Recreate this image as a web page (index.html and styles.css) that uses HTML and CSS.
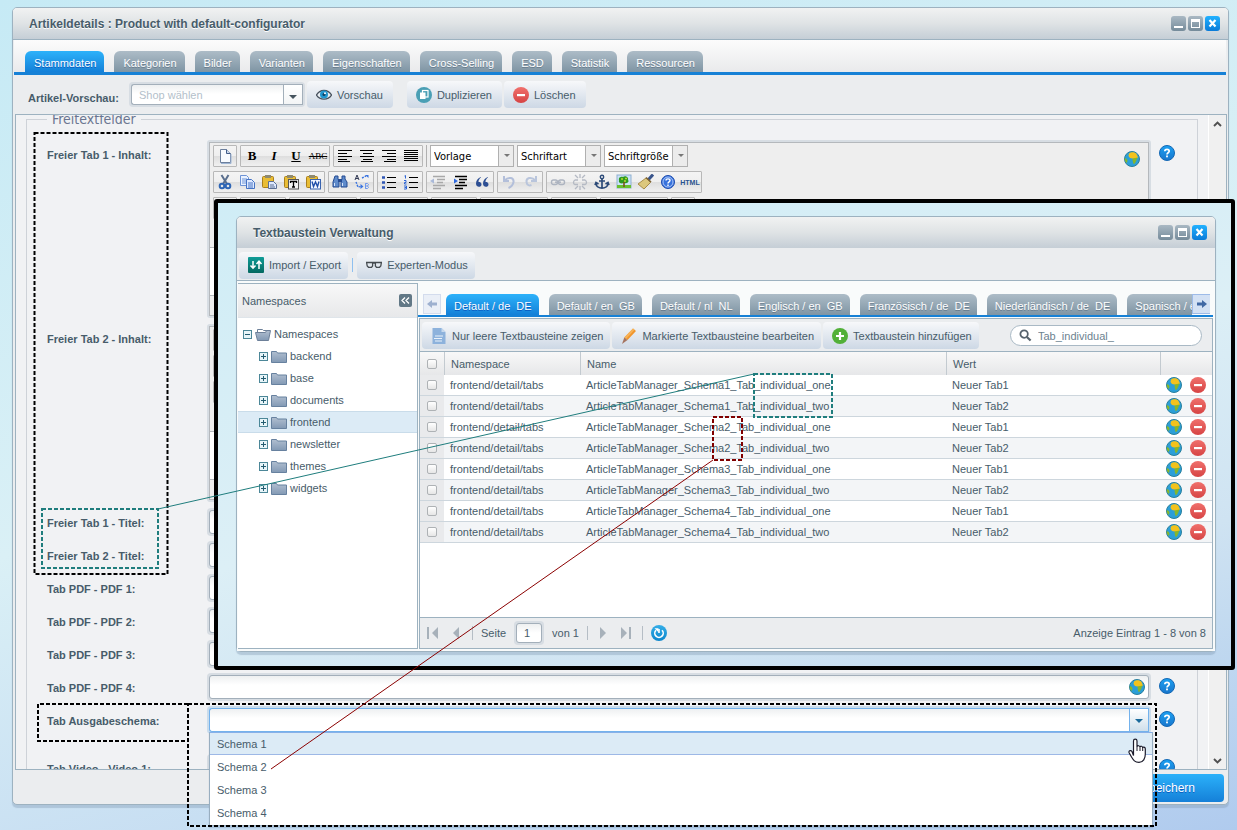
FILE: index.html
```
<!DOCTYPE html>
<html lang="de">
<head>
<meta charset="utf-8">
<title>Artikeldetails</title>
<link rel="stylesheet" href="styles.css">
</head>
<body>
<svg class="defs" aria-hidden="true">
  <defs>
    <linearGradient id="gFolder" x1="0" y1="0" x2="0" y2="1"><stop offset="0" stop-color="#b1bfd0"/><stop offset="1" stop-color="#8299b4"/></linearGradient>
    <linearGradient id="gTeal" x1="0" y1="0" x2="0" y2="1"><stop offset="0" stop-color="#0f9c97"/><stop offset="1" stop-color="#046860"/></linearGradient>
    <linearGradient id="gRed" x1="0" y1="0" x2="0" y2="1"><stop offset="0" stop-color="#f0706c"/><stop offset="1" stop-color="#d64444"/></linearGradient>
    <linearGradient id="gBlue" x1="0" y1="0" x2="0" y2="1"><stop offset="0" stop-color="#35aee8"/><stop offset="1" stop-color="#0c86cc"/></linearGradient>
    <linearGradient id="gHelp" x1="0" y1="0" x2="0" y2="1"><stop offset="0" stop-color="#1ba0f2"/><stop offset="1" stop-color="#1976cc"/></linearGradient>
  </defs>
  <symbol id="globe" viewBox="0 0 16 16"><circle cx="8" cy="8" r="7.5" fill="#2b9fd8" stroke="#2a7f9c"/><path d="M5 2.5C7 .8 11 .8 12.500 3L14 6.500l-2 1-2 .5-1.500-.6L6 7 4.500 5z" fill="#f3c21c"/><path d="M8.500 7.400L13.500 6.500 12.300 9.500 10.800 12.500 9.500 13 8.700 10z" fill="#86b62c"/><path d="M.8 7l2 1 .8 2-1.200 2C1 10.500.6 9 .8 7z" fill="#86b62c"/></symbol>
  <symbol id="help" viewBox="0 0 16 16"><circle cx="8" cy="8" r="7.500" fill="url(#gHelp)" stroke="#1468b4"/><path d="M5.800 6.200C5.800 3.700 10.200 3.700 10.200 6.200 10.200 7.700 8 7.700 8 9.400" fill="none" stroke="#fff" stroke-width="1.700"/><rect x="7.100" y="10.500" width="1.800" height="1.800" fill="#fff"/></symbol>
  <symbol id="minus" viewBox="0 0 16 16"><circle cx="8" cy="8" r="8" fill="url(#gRed)"/><rect x="4" y="7" width="8" height="2.200" fill="#fff"/></symbol>
  <symbol id="plus" viewBox="0 0 16 16"><circle cx="8" cy="8" r="8" fill="#52b038"/><path d="M4 8h8M8 4v8" stroke="#fff" stroke-width="2.200"/></symbol>
  <symbol id="eye" viewBox="0 0 16 16"><path d="M.5 8C4 2 12 2 15.500 8 12 13.500 4 13.500.5 8z" fill="#e8eef3" stroke="#46505c" stroke-width="1.300"/><circle cx="8" cy="7.500" r="4" fill="#2196cf"/><circle cx="8" cy="7.500" r="1.500" fill="#123f60"/><circle cx="9" cy="6.300" r="1" fill="#fff"/></symbol>
  <symbol id="copy" viewBox="0 0 16 16"><circle cx="8" cy="8" r="8" fill="#4a9fb5"/><rect x="6.500" y="3.500" width="5.500" height="6.500" fill="none" stroke="#fff" stroke-width="1.200"/><rect x="4" y="5.500" width="5.500" height="6.500" fill="#fff"/></symbol>
  <symbol id="swap" viewBox="0 0 16 16"><rect width="16" height="16" rx="1" fill="url(#gTeal)"/><path d="M5 4v7M2.500 8.500L5 11.200 7.500 8.500M11 12V4.500M8.500 7L11 4.200 13.500 7" fill="none" stroke="#fff" stroke-width="1.500"/></symbol>
  <symbol id="glasses" viewBox="0 0 16 16"><path d="M.6 5.500h6V9L5.500 10.300h-3L1.200 9zM9.400 5.500h6L14.800 9l-1.300 1.300h-3L9.400 9zM6.600 6h2.800M0 5.500h16" fill="none" stroke="#454b50" stroke-width="1.300"/></symbol>
  <symbol id="doc" viewBox="0 0 16 16"><path d="M1.500 0h9l4 4v12h-13z" fill="#8db2dc"/><path d="M10.500 0l4 4h-4z" fill="#c6d9ee"/><path d="M4 8h8M3 10.500h8M4 13h7" stroke="#eaf2fa" stroke-width="1.200"/></symbol>
  <symbol id="pencil" viewBox="0 0 16 16"><path d="M12 .5l3 2.500-8.500 9L3.300 9.500z" fill="#f0952c"/><path d="M12 .5L13.500 1.800 5 11 3.300 9.500z" fill="#f7b257"/><path d="M3.300 9.500l3.200 2.500L1 16z" fill="#a5745f"/></symbol>
  <symbol id="search" viewBox="0 0 14 14"><circle cx="5.500" cy="5.500" r="4" fill="none" stroke="#56626c" stroke-width="1.900"/><path d="M8.500 8.500l4 4" stroke="#56626c" stroke-width="2.300"/></symbol>
  <symbol id="folder" viewBox="0 0 16 13"><path d="M.5 1.500h5l1 1.500h9v9.500H.5z" fill="url(#gFolder)" stroke="#67819f"/></symbol>
  <symbol id="folderOpen" viewBox="0 0 16 13"><path d="M2.500 4V1.500h5l1 1h6V6" fill="#fff" stroke="#6d8099"/><path d="M.5 4.500h10l1-2h4l-2 10h-11z" fill="url(#gFolder)" stroke="#6d8099"/></symbol>
  <symbol id="exp" viewBox="0 0 9 9"><rect x=".5" y=".5" width="8" height="8" fill="#e8f5f9" stroke="#4c8798"/><path d="M2 4.500h5M4.500 2v5" stroke="#245c70"/></symbol>
  <symbol id="col" viewBox="0 0 9 9"><rect x=".5" y=".5" width="8" height="8" fill="#e8f5f9" stroke="#4c8798"/><path d="M2 4.500h5" stroke="#245c70"/></symbol>
  <symbol id="reload" viewBox="0 0 16 16"><circle cx="8" cy="8" r="8" fill="url(#gBlue)"/><path d="M5 5.200A4.200 4.200 0 1 0 11 5.200M8 4v4" fill="none" stroke="#fff" stroke-width="1.600"/><path d="M3.500 3.200h4v4z" fill="#fff"/></symbol>
  <symbol id="new" viewBox="0 0 16 16"><path d="M3.500 1.500h6l4 4v9h-10z" fill="#f8fbff" stroke="#6c7f9c"/><path d="M9.500 1.500v4h4" fill="#cbd9ee" stroke="#425d89"/><path d="M4 15.500h10V6" fill="none" stroke="#9eb5d4"/></symbol>
  <symbol id="al" viewBox="0 0 16 16"><path d="M1 2.500h14M1 5.500h9M1 8.500h14M1 11.500h9M1 13.500h12" stroke="#000"/></symbol>
  <symbol id="ac" viewBox="0 0 16 16"><path d="M1 2.500h14M4 5.500h9M1 8.500h14M4 11.500h9M2 13.500h12" stroke="#000"/></symbol>
  <symbol id="ar" viewBox="0 0 16 16"><path d="M1 2.500h14M6 5.500h9M1 8.500h14M6 11.500h9M3 13.500h12" stroke="#000"/></symbol>
  <symbol id="aj" viewBox="0 0 16 16"><path d="M1 2.500h14M1 4.500h14M1 6.500h14M1 8.500h14M1 10.500h14M1 12.500h14" stroke="#000"/></symbol>
  <symbol id="cut" viewBox="0 0 16 16"><path d="M4.500 1L10 10M11.500 1L6 10" stroke="#5a6f8e" stroke-width="2"/><circle cx="5" cy="12" r="2.300" fill="none" stroke="#2f66b5" stroke-width="2"/><circle cx="11" cy="12" r="2.300" fill="none" stroke="#2f66b5" stroke-width="2"/></symbol>
  <symbol id="cp" viewBox="0 0 16 16"><path d="M1.500 1.500h6l2 2v8h-8z" fill="#eaf2ff" stroke="#6d93d6"/><path d="M3 5h5M3 7h5M3 9h4" stroke="#6d93d6"/><path d="M7.500 5.500h5l3 3v6h-8z" fill="#dfeaff" stroke="#4573c4"/><path d="M9 9h5M9 11h5M9 13h5" stroke="#4573c4"/></symbol>
  <symbol id="clip" viewBox="0 0 16 16"><rect x="1.500" y="2.500" width="11" height="11" rx="1" fill="#e9bd35" stroke="#a97f1d"/><path d="M4 1h6v3H4z" fill="#8f8a70"/></symbol>
  <symbol id="paste" viewBox="0 0 16 16"><use href="#clip"/><path d="M7.500 7.500h5l3 3v4h-8z" fill="#dfeaff" stroke="#5b6f94"/><path d="M9 11h4M9 13h5" stroke="#5b6f94"/></symbol>
  <symbol id="pasteT" viewBox="0 0 16 16"><use href="#clip"/><rect x="5.500" y="5.500" width="10" height="9.500" fill="#f4f4f4" stroke="#555"/><path d="M7.500 9V7.500h6V9M10.500 7.500V13M9 13h3" fill="none" stroke="#000" stroke-width="1.300"/></symbol>
  <symbol id="pasteW" viewBox="0 0 16 16"><use href="#clip"/><rect x="5.500" y="5.500" width="10" height="9.500" fill="#f2f6ff" stroke="#3964b0"/><path d="M7 7.500l1.500 5 2-4.500 2 4.500 1.500-5" fill="none" stroke="#1e4da8" stroke-width="1.400"/></symbol>
  <symbol id="find" viewBox="0 0 16 16"><path d="M3 2h3v3l1 2v6H1V8zM10 2h3v3l2 3v5H9V7l1-2z" fill="#5f8bcb" stroke="#254b91"/><path d="M6 6.500h4" stroke="#254b91" stroke-width="3"/><path d="M2.500 9v3M10.500 9v3" stroke="#d5e4fa"/></symbol>
  <symbol id="repl" viewBox="0 0 16 16"><path d="M1 6L3 1l2 5M1.700 4.500h2.600" fill="none" stroke="#333b55"/><path d="M11.500 9.500h2l1 1-1 1.500 1 1.500-1 1h-2zM11.500 9.500v5M11.500 12h2" fill="none" stroke="#6d97ec"/><path d="M8 4l4-2M2 8l2 5 4-.5" fill="none" stroke="#3a74e0" stroke-width="1.400" stroke-dasharray="2 1"/><path d="M11 1h3.500v3zM6.500 10l3 2.500-3 2.500z" fill="#3a74e0"/></symbol>
  <symbol id="ul" viewBox="0 0 16 16"><path d="M6 3.500h9M6 8.500h9M6 13.500h9" stroke="#000"/><path d="M1 3.500h3M1 8.500h3M1 13.500h3" stroke="#2f57b5" stroke-width="2.600"/></symbol>
  <symbol id="ol" viewBox="0 0 16 16"><path d="M6 3.500h9M6 8.500h9M6 13.500h9" stroke="#000"/><path d="M1.500 2l1-.5v3M1 6.500h2v2H1.500v1.500H3.500M1 12h2.500v3H1M1.500 13.500h2" fill="none" stroke="#2f66d5"/></symbol>
  <symbol id="out" viewBox="0 0 16 16"><path d="M3 2.500h12M7 5.500h8M7 8.500h6M3 11.500h12M3 14.500h8" stroke="#a8a8a8" stroke-width="1.500"/><path d="M4 4.500v5L0 7z" fill="#a9b9d9"/></symbol>
  <symbol id="in" viewBox="0 0 16 16"><path d="M3 2.500h12M7 5.500h8M7 8.500h6M3 11.500h12M3 14.500h8" stroke="#000" stroke-width="1.500"/><path d="M2 4.500v5L6 7z" fill="#2f6ae0"/></symbol>
  <symbol id="quote" viewBox="0 0 16 16"><path d="M7 3C4 4 2 6.500 2 9.500 2 14 7.500 13.500 7.500 10.500 7.500 8.500 6 8 4.500 8 4.500 6 5.500 4.500 7 3.500zM14 3c-3 1-5 3.500-5 6.500 0 4.500 5.500 4 5.500 1 0-2-1.500-2.500-3-2.500 0-2 1-3.500 2.500-4.500z" fill="#2c4e93"/></symbol>
  <symbol id="undo" viewBox="0 0 16 16"><path d="M3 2v5h5M3.500 6.500C8 2 13 4 12.500 8 12 11 10 13 7.500 14" fill="none" stroke="#b3bfda" stroke-width="2"/></symbol>
  <symbol id="redo" viewBox="0 0 16 16"><path d="M13 2v5H8M12.500 6.500C8 2 3 4 3.500 8 4 11 6 12 8.500 11" fill="none" stroke="#b9c5dc" stroke-width="2"/></symbol>
  <symbol id="link" viewBox="0 0 16 16"><rect x="1.500" y="6" width="6" height="4.500" rx="2" fill="none" stroke="#adb4c0" stroke-width="1.400"/><rect x="8.500" y="6" width="6" height="4.500" rx="2" fill="none" stroke="#adb4c0" stroke-width="1.400"/><path d="M5 8.200h6" stroke="#adb4c0" stroke-width="1.500"/></symbol>
  <symbol id="unlink" viewBox="0 0 16 16"><path d="M6 6H3C1 7 1 10 3 10.500h3M10 6h3c2 1 2 4 0 4.500h-3M8 0v4M3 1l3 3M13 1l-3 3M8 12v4M3 15l3-3M13 15l-3-3" fill="none" stroke="#b4b9c3" stroke-width="1.300"/></symbol>
  <symbol id="anchor" viewBox="0 0 16 16"><circle cx="8" cy="3" r="1.700" fill="none" stroke="#2c4a78" stroke-width="1.400"/><path d="M8 5v9M5 7h6M2 9c0 7 12 7 12 0M1 11l1-2.500L4.500 10M15 11l-1-2.500L11.500 10" fill="none" stroke="#2c4a78" stroke-width="1.700"/></symbol>
  <symbol id="tree" viewBox="0 0 16 16"><rect x="1" y="1" width="14" height="13" fill="#cbe2f8" stroke="#8fb0d0"/><path d="M1 11h14v3H1z" fill="#68c02f"/><path d="M3 6c-1-3 3-4 4-3 2-2 6 0 5 3 2 2-2 4-4 3-3 1-6 0-5-3z" fill="#2f9a20"/><path d="M5 5h2M9 4.500h2M8 7h2" stroke="#b7d92c" stroke-width="1.300"/><path d="M8 8v5" stroke="#79521d" stroke-width="1.600"/></symbol>
  <symbol id="broom" viewBox="0 0 16 16"><path d="M10.500 5.500l4.500-5" stroke="#39558c" stroke-width="3"/><path d="M8 4l4.500 4.500L6 15l-6-5z" fill="#dcc77c" stroke="#a88c48"/><path d="M8 3.500L13 8" stroke="#7b6238" stroke-width="1.600"/></symbol>
  <symbol id="qm" viewBox="0 0 16 16"><circle cx="8" cy="8" r="6.500" fill="#3772dc" stroke="#1e4cae"/><circle cx="8" cy="8" r="5" fill="none" stroke="#c8dbff" stroke-width=".8"/><path d="M6 6.500C6 4.300 10 4.300 10 6.500 10 8 8 7.800 8 9.500M8 10.500V12" fill="none" stroke="#fff" stroke-width="1.400"/></symbol>
  <symbol id="chev" viewBox="0 0 9 6"><path d="M1 5l3.500-3.500L8 5" fill="none" stroke="#505050" stroke-width="1.900"/></symbol>
</svg>

<main class="desktop">
  <section class="window main-window">
    <header class="titlebar titlebar-main">
      <h1>Artikeldetails : Product with default-configurator</h1>
      <div class="tools"><button class="tool t-min" aria-label="Minimieren"></button><button class="tool t-max" aria-label="Maximieren"></button><button class="tool t-close" aria-label="Schließen"><svg viewBox="0 0 15 15"><path d="M4.500 4l6 6.500M10.500 4l-6 6.500" stroke="#fff" stroke-width="2.200"/></svg></button></div>
    </header>
    <nav class="tabs tabs-main">
      <button class="tab active">Stammdaten</button><button class="tab">Kategorien</button><button class="tab">Bilder</button><button class="tab">Varianten</button><button class="tab">Eigenschaften</button><button class="tab">Cross-Selling</button><button class="tab">ESD</button><button class="tab">Statistik</button><button class="tab">Ressourcen</button>
    </nav>
    <div class="toolbar toolbar-main">
      <label class="flabel" for="shop">Artikel-Vorschau:</label>
      <div class="field combo shop"><input id="shop" type="text" placeholder="Shop wählen"><button class="trigger" aria-label="Shops"></button></div>
      <button class="btn"><svg><use href="#eye"/></svg>Vorschau</button>
      <button class="btn btn-gap"><svg><use href="#copy"/></svg>Duplizieren</button>
      <button class="btn"><svg><use href="#minus"/></svg>Löschen</button>
    </div>
    <div class="form-panel">
      <div class="form-scroll">
        <fieldset class="fieldset">
          <legend>Freitextfelder</legend>
          <div class="row">
            <span class="flabel">Freier Tab 1 - Inhalt:</span>
            <div class="editor">
              <div class="ed-tools">
                <div class="ed-row">
                  <div class="grp"><button aria-label="Neu"><svg><use href="#new"/></svg></button></div>
                  <div class="grp"><button class="g-b">B</button><button class="g-i">I</button><button class="g-u">U</button><button class="g-s">ABC</button></div>
                  <div class="grp"><button aria-label="Links"><svg><use href="#al"/></svg></button><button aria-label="Zentriert"><svg><use href="#ac"/></svg></button><button aria-label="Rechts"><svg><use href="#ar"/></svg></button><button aria-label="Blocksatz"><svg><use href="#aj"/></svg></button></div>
                  <i class="ed-sep"></i>
                  <div class="ed-select"><select aria-label="Vorlage"><option>Vorlage</option></select></div>
                  <div class="ed-select"><select aria-label="Schriftart"><option>Schriftart</option></select></div>
                  <div class="ed-select"><select aria-label="Schriftgröße"><option>Schriftgröße</option></select></div>
                </div>
                <div class="ed-row">
                  <div class="grp"><button aria-label="Ausschneiden"><svg><use href="#cut"/></svg></button><button aria-label="Kopieren"><svg><use href="#cp"/></svg></button><button aria-label="Einfügen"><svg><use href="#paste"/></svg></button><button aria-label="Als Text einfügen"><svg><use href="#pasteT"/></svg></button><button aria-label="Aus Word einfügen"><svg><use href="#pasteW"/></svg></button></div>
                  <div class="grp"><button aria-label="Suchen"><svg><use href="#find"/></svg></button><button aria-label="Ersetzen"><svg><use href="#repl"/></svg></button></div>
                  <div class="grp"><button aria-label="Liste"><svg><use href="#ul"/></svg></button><button aria-label="Nummerierung"><svg><use href="#ol"/></svg></button></div>
                  <div class="grp"><button aria-label="Ausrücken"><svg><use href="#out"/></svg></button><button aria-label="Einrücken"><svg><use href="#in"/></svg></button><button aria-label="Zitat"><svg><use href="#quote"/></svg></button></div>
                  <div class="grp"><button aria-label="Rückgängig"><svg><use href="#undo"/></svg></button><button aria-label="Wiederholen"><svg><use href="#redo"/></svg></button></div>
                  <div class="grp"><button aria-label="Link"><svg><use href="#link"/></svg></button><button aria-label="Link entfernen"><svg><use href="#unlink"/></svg></button><button aria-label="Anker"><svg><use href="#anchor"/></svg></button><button aria-label="Bild"><svg><use href="#tree"/></svg></button><button aria-label="Aufräumen"><svg><use href="#broom"/></svg></button><button aria-label="Hilfe"><svg><use href="#qm"/></svg></button><button class="g-html">HTML</button></div>
                </div>
                <div class="ed-row"><div class="grp w1"></div><div class="grp w2"></div><div class="grp w3"></div><div class="grp w3"></div><div class="grp w2"></div><div class="grp w3"></div><div class="grp w2"></div><div class="grp w3"></div><div class="grp w1"></div></div>
                <svg class="ed-globe"><use href="#globe"/></svg>
              </div>
              <div class="ed-body"></div>
              <div class="ed-foot"></div>
            </div>
            <svg class="help"><use href="#help"/></svg>
          </div>
          <div class="row">
            <span class="flabel">Freier Tab 2 - Inhalt:</span>
            <div class="editor">
              <div class="ed-tools"><div class="ed-row"><div class="grp w1"></div></div><div class="ed-row"><div class="grp w1"></div></div><div class="ed-row"><div class="grp w1"></div></div></div>
              <div class="ed-body"></div>
              <div class="ed-foot"></div>
            </div>
            <svg class="help"><use href="#help"/></svg>
          </div>
          <div class="row"><label class="flabel" for="t1">Freier Tab 1 - Titel:</label><div class="field"><input id="t1" type="text"></div><svg class="help"><use href="#help"/></svg></div>
          <div class="row"><label class="flabel" for="t2">Freier Tab 2 - Titel:</label><div class="field"><input id="t2" type="text"></div><svg class="help"><use href="#help"/></svg></div>
          <div class="row"><label class="flabel" for="p1">Tab PDF - PDF 1:</label><div class="field"><input id="p1" type="text"></div><svg class="help"><use href="#help"/></svg></div>
          <div class="row"><label class="flabel" for="p2">Tab PDF - PDF 2:</label><div class="field"><input id="p2" type="text"></div><svg class="help"><use href="#help"/></svg></div>
          <div class="row"><label class="flabel" for="p3">Tab PDF - PDF 3:</label><div class="field"><input id="p3" type="text"></div><svg class="help"><use href="#help"/></svg></div>
          <div class="row"><label class="flabel" for="p4">Tab PDF - PDF 4:</label><div class="field"><input id="p4" type="text"><svg class="in-globe"><use href="#globe"/></svg></div><svg class="help"><use href="#help"/></svg></div>
          <div class="row row-last"><label class="flabel" for="sch">Tab Ausgabeschema:</label><div class="field combo focus"><input id="sch" type="text"><button class="trigger" aria-label="Schemata"></button></div><svg class="help"><use href="#help"/></svg></div>
          <div class="row"><label class="flabel" for="v1">Tab Video - Video 1:</label><div class="field"><input id="v1" type="text"></div><svg class="help"><use href="#help"/></svg></div>
        </fieldset>
      </div>
      <div class="scrollbar"><svg><use href="#chev"/></svg><svg class="down"><use href="#chev"/></svg></div>
    </div>
    <footer class="footer"><button class="save">Speichern</button></footer>
  </section>

  <div class="inset">
    <section class="window text-window">
      <header class="titlebar">
        <h2>Textbaustein Verwaltung</h2>
        <div class="tools"><button class="tool t-min" aria-label="Minimieren"></button><button class="tool t-max" aria-label="Maximieren"></button><button class="tool t-close" aria-label="Schließen"><svg viewBox="0 0 15 15"><path d="M4.500 4l6 6.500M10.500 4l-6 6.500" stroke="#fff" stroke-width="2.200"/></svg></button></div>
      </header>
      <div class="toolbar toolbar-text">
        <button class="btn"><svg><use href="#swap"/></svg>Import / Export</button><i class="tb-sep"></i><button class="btn"><svg><use href="#glasses"/></svg>Experten-Modus</button>
      </div>
      <div class="tw-body">
        <aside class="side">
          <div class="side-head"><span>Namespaces</span><button class="collapse" aria-label="Einklappen"><svg viewBox="0 0 13 13"><path d="M6 3.500l-3 3 3 3M10 3.500l-3 3 3 3" fill="none" stroke="#fff" stroke-width="1.300"/></svg></button></div>
          <ul class="tree">
            <li class="root"><svg class="x"><use href="#col"/></svg><svg class="f"><use href="#folderOpen"/></svg>Namespaces</li>
            <li><svg class="x"><use href="#exp"/></svg><svg class="f"><use href="#folder"/></svg>backend</li>
            <li><svg class="x"><use href="#exp"/></svg><svg class="f"><use href="#folder"/></svg>base</li>
            <li><svg class="x"><use href="#exp"/></svg><svg class="f"><use href="#folder"/></svg>documents</li>
            <li class="sel"><svg class="x"><use href="#exp"/></svg><svg class="f"><use href="#folder"/></svg>frontend</li>
            <li><svg class="x"><use href="#exp"/></svg><svg class="f"><use href="#folder"/></svg>newsletter</li>
            <li><svg class="x"><use href="#exp"/></svg><svg class="f"><use href="#folder"/></svg>themes</li>
            <li><svg class="x"><use href="#exp"/></svg><svg class="f"><use href="#folder"/></svg>widgets</li>
          </ul>
        </aside>
        <div class="content">
          <div class="tabbar">
            <button class="scr scr-off" aria-label="Zurück"><svg viewBox="0 0 10 10"><path d="M10 3.500H5V1L0 5l5 4V6.500h5z" fill="#9db0cf"/></svg></button>
            <nav class="tabs tabs-text"><button class="tab active">Default / de  DE</button><button class="tab">Default / en  GB</button><button class="tab">Default / nl  NL</button><button class="tab">Englisch / en  GB</button><button class="tab">Französisch / de  DE</button><button class="tab">Niederländisch / de  DE</button><button class="tab">Spanisch / es  ES</button></nav>
            <button class="scr" aria-label="Weiter"><svg viewBox="0 0 10 10"><path d="M0 3.500h5V1l5 4-5 4V6.500H0z" fill="#4068a4"/></svg></button>
          </div>
          <div class="grid">
            <div class="toolbar toolbar-grid">
              <button class="btn"><svg><use href="#doc"/></svg>Nur leere Textbausteine zeigen</button><button class="btn"><svg><use href="#pencil"/></svg>Markierte Textbausteine bearbeiten</button><button class="btn"><svg><use href="#plus"/></svg>Textbaustein hinzufügen</button>
              <div class="search"><svg><use href="#search"/></svg><input type="text" aria-label="Suche" value="Tab_individual_"></div>
            </div>
            <div class="grid-view">
              <table>
                <colgroup><col class="c-check"><col class="c-ns"><col><col class="c-val"><col class="c-act"></colgroup>
                <thead><tr><th><input type="checkbox" aria-label="Alle"></th><th>Namespace</th><th>Name</th><th>Wert</th><th></th></tr></thead>
                <tbody>
                  <tr><td><input type="checkbox" aria-label="Zeile 1"></td><td>frontend/detail/tabs</td><td>ArticleTabManager_Schema1_Tab_individual_one</td><td>Neuer Tab1</td><td><div class="acts"><svg><use href="#globe"/></svg><svg><use href="#minus"/></svg></div></td></tr>
                  <tr><td><input type="checkbox" aria-label="Zeile 2"></td><td>frontend/detail/tabs</td><td>ArticleTabManager_Schema1_Tab_individual_two</td><td>Neuer Tab2</td><td><div class="acts"><svg><use href="#globe"/></svg><svg><use href="#minus"/></svg></div></td></tr>
                  <tr><td><input type="checkbox" aria-label="Zeile 3"></td><td>frontend/detail/tabs</td><td>ArticleTabManager_Schema2_Tab_individual_one</td><td>Neuer Tab1</td><td><div class="acts"><svg><use href="#globe"/></svg><svg><use href="#minus"/></svg></div></td></tr>
                  <tr><td><input type="checkbox" aria-label="Zeile 4"></td><td>frontend/detail/tabs</td><td>ArticleTabManager_Schema2_Tab_individual_two</td><td>Neuer Tab2</td><td><div class="acts"><svg><use href="#globe"/></svg><svg><use href="#minus"/></svg></div></td></tr>
                  <tr><td><input type="checkbox" aria-label="Zeile 5"></td><td>frontend/detail/tabs</td><td>ArticleTabManager_Schema3_Tab_individual_one</td><td>Neuer Tab1</td><td><div class="acts"><svg><use href="#globe"/></svg><svg><use href="#minus"/></svg></div></td></tr>
                  <tr><td><input type="checkbox" aria-label="Zeile 6"></td><td>frontend/detail/tabs</td><td>ArticleTabManager_Schema3_Tab_individual_two</td><td>Neuer Tab2</td><td><div class="acts"><svg><use href="#globe"/></svg><svg><use href="#minus"/></svg></div></td></tr>
                  <tr><td><input type="checkbox" aria-label="Zeile 7"></td><td>frontend/detail/tabs</td><td>ArticleTabManager_Schema4_Tab_individual_one</td><td>Neuer Tab1</td><td><div class="acts"><svg><use href="#globe"/></svg><svg><use href="#minus"/></svg></div></td></tr>
                  <tr><td><input type="checkbox" aria-label="Zeile 8"></td><td>frontend/detail/tabs</td><td>ArticleTabManager_Schema4_Tab_individual_two</td><td>Neuer Tab2</td><td><div class="acts"><svg><use href="#globe"/></svg><svg><use href="#minus"/></svg></div></td></tr>
                </tbody>
              </table>
            </div>
            <div class="paging">
              <button class="pg" aria-label="Erste Seite"><svg viewBox="0 0 12 12"><path d="M1 0h2v12H1zM12 0v12L6 6z" fill="#a7b1ba"/></svg></button>
              <button class="pg" aria-label="Vorherige Seite"><svg viewBox="0 0 12 12"><path d="M10 0v12L4 6z" fill="#a7b1ba"/></svg></button>
              <i class="pg-sep"></i>
              <label for="page">Seite</label>
              <div class="field page"><input id="page" type="text" value="1"></div>
              <span>von 1</span>
              <i class="pg-sep"></i>
              <button class="pg" aria-label="Nächste Seite"><svg viewBox="0 0 12 12"><path d="M4 0v12l6-6z" fill="#a7b1ba"/></svg></button>
              <button class="pg" aria-label="Letzte Seite"><svg viewBox="0 0 12 12"><path d="M10 0h2v12h-2zM2 0v12l6-6z" fill="#a7b1ba"/></svg></button>
              <i class="pg-sep"></i>
              <button class="pg reload" aria-label="Aktualisieren"><svg><use href="#reload"/></svg></button>
              <span class="pg-info">Anzeige Eintrag 1 - 8 von 8</span>
            </div>
          </div>
        </div>
      </div>
    </section>
  </div>

  <ul class="dropdown">
    <li class="over">Schema 1</li><li>Schema 2</li><li>Schema 3</li><li>Schema 4</li>
  </ul>

  <svg class="notes" width="1237" height="830" viewBox="0 0 1237 830" aria-hidden="true">
    <g fill="none" stroke-width="2" stroke-dasharray="4 2">
      <rect x="34.500" y="133" width="133" height="441" stroke="#000"/>
      <rect x="42" y="509" width="116" height="59" stroke="#1f7d7d"/>
      <path d="M188 704H38v37h150M188 704h968v122H188z" stroke="#000"/>
      <rect x="754" y="374" width="78" height="43" stroke="#1f7d7d"/>
      <rect x="713" y="417" width="29" height="43" stroke="#800000"/>
    </g>
    <path d="M158 509L754 374" stroke="#1f7d7d"/>
    <path d="M713 460L271 769" stroke="#8b0000"/>
    <path d="M1133.500 755.500v-14.500c0-2.500 3.500-2.500 3.500 0v6c0-2 3-1.500 3 .5 0-2 2.700-1.500 2.700.5 0-1.600 2.600-1 2.600.8v5.500c0 4-2 8-6.300 8s-5.500-2-7.500-5.300l-2.500-4.500c-.5-2 2-2.500 3-1z" fill="#fff" stroke="#1a1a2a" stroke-width="1.200"/>
    <path d="M1137 747v4M1140 747.500v3.500M1142.700 748v3" stroke="#1a1a2a"/>
  </svg>
</main>
</body>
</html>
```
FILE: styles.css
```
* { box-sizing: border-box; }
html, body { margin: 0; height: 100%; }
body, button, input, select, table {
  font-family: "Liberation Sans", Arial, sans-serif;
  font-size: 11px;
  color: #475c6a;
}
button { border: 0; padding: 0; background: none; }
input { min-width: 0; border: 0; padding: 0; outline: 0; background: none; }
ul { list-style: none; margin: 0; padding: 0; }
svg { display: block; width: 16px; height: 16px; flex: none; }
.defs { position: absolute; width: 0; height: 0; }

.desktop {
  position: relative;
  display: flex;
  height: 100vh;
  min-height: 830px;
  padding: 7px 8px 25px 12px;
  overflow: hidden;
  background: linear-gradient(165deg, #c6eaf5 0%, #daf0f6 48%, #c6ddf2 78%, #b0cbee 100%);
}

/* Windows */
.window {
  display: flex;
  flex-direction: column;
  flex: 1;
  min-width: 0;
  border: 1px solid #9db2c0;
  border-radius: 5px;
  background: #ebedef;
  box-shadow: 0 3px 1px rgba(130, 155, 180, .4);
}
.titlebar {
  display: flex;
  align-items: center;
  justify-content: space-between;
  height: 31px;
  flex: none;
  padding: 0 8px 0 16px;
  border-radius: 4px 4px 0 0;
  background: linear-gradient(#f1f2f2, #dfe3e5 50%, #c5ced6);
}
.titlebar-main { height: 32px; border-bottom: 1px solid #9db2c0; }
.titlebar h1, .titlebar h2 { margin: 0; font-size: 12px; font-weight: bold; text-shadow: 0 1px 0 #fff; }
.tools { display: flex; gap: 2px; }
.tool { position: relative; width: 15px; height: 15px; border-radius: 3px; background: linear-gradient(#a9b8c3, #758b9a); }
.tool svg { width: 15px; height: 15px; }
.t-min::after { content: ""; position: absolute; left: 3px; right: 3px; bottom: 3px; height: 2px; background: #fff; }
.t-max::after { content: ""; position: absolute; inset: 3px; border: 1px solid #fff; border-top-width: 3px; }
.t-close { background: linear-gradient(#21b1ff, #0a7bd8); }

/* Tabs */
.tabs { display: flex; align-items: flex-end; gap: 10px; }
.tabs-main { height: 35px; flex: none; margin: 0 2px 0 1px; padding-left: 11px; border-bottom: 3px solid #1681d6; background: linear-gradient(#fcfcfc, #e9eaec); }
.tab {
  flex: none;
  height: 21px;
  padding: 3px 8px 0 9px;
  border-radius: 6px 6px 0 0;
  line-height: 18px;
  white-space: pre;
  color: #fff;
  background: linear-gradient(#adbcc7, #7f95a4);
  text-shadow: 0 1px 0 rgba(70, 90, 110, .5);
}
.tabs-text .tab { padding: 3px 7px 0 8px; }
.tab.active { background: linear-gradient(#2db2fa, #1380d8); text-shadow: 0 1px 0 #0a5cc0; }

/* Toolbars and buttons */
.toolbar { display: flex; flex: none; align-items: center; gap: 2px; }
.toolbar-main { height: 39px; padding: 0 15px; }
.btn {
  display: flex;
  flex: none;
  align-items: center;
  gap: 5px;
  height: 27px;
  padding: 0 10px 0 9px;
  border-radius: 4px;
  white-space: nowrap;
  background: linear-gradient(#f7f8fa, #cdd8e5);
}
.toolbar-text .btn, .toolbar-grid .btn { padding-right: 7px; }
.btn-gap { margin-left: 12px; }
.flabel { font-weight: bold; }
.toolbar-main .flabel { width: 99px; padding-top: 7px; }

/* Fields */
.field {
  position: relative;
  display: flex;
  flex: 1;
  height: 28px;
  padding: 2px;
  border-radius: 4px;
  background: #d7dde3;
}
.field input {
  flex: 1;
  padding: 0 7px;
  border: 1px solid #a3afba;
  border-radius: 3px;
  background: linear-gradient(#eef0f1, #fff 9px);
}
.field input::placeholder { color: #b3c0ca; opacity: 1; }
.combo input { border-right: 0; border-radius: 3px 0 0 3px; }
.trigger { position: relative; width: 20px; border: 1px solid #a3afba; background: linear-gradient(#fff, #f3f5f6); }
.trigger::after { content: ""; position: absolute; left: 5px; top: 10px; border: 4px solid transparent; border-top-color: #46545e; border-bottom: 0; }
.shop { flex: none; width: 176px; height: 25px; }
.focus { background: #c9dcec; }
.focus input, .focus .trigger { border-color: #74b2ec; }
.focus .trigger { background: linear-gradient(#fff, #cfdfeb); }
.focus .trigger::after { border-top-color: #1a6a9c; }
.in-globe { position: absolute; right: 6px; top: 6px; }

/* Form */
.form-panel { display: flex; flex: 1; min-height: 0; margin: 0 1px 0 2px; border: 1px solid #9db2c0; background: #f1f2f4; }
.form-scroll { flex: 1; min-width: 0; overflow: hidden; }
.fieldset {
  margin: -5px 10px 0;
  padding: 12px 22px 0 20px;
  border: 1px solid #ced2d8;
}
.fieldset legend { height: 18px; padding: 0 5px; font: 14px/18px "DejaVu Sans Condensed", "DejaVu Sans", sans-serif; color: #6a7590; }
.row { display: flex; margin-bottom: 5px; }
.row .flabel { flex: none; width: 160px; line-height: 14px; padding-top: 8px; }
.row-last { margin-bottom: 20px; }
.help { margin: 5px 0 0 8px; }
.scrollbar { display: flex; flex-direction: column; justify-content: space-between; width: 18px; padding: 6px 4px 5px; border-left: 1px solid #fff; background: #f0f0f0; }
.scrollbar svg { width: 9px; height: 6px; }
.down { transform: rotate(180deg); }
.footer { display: flex; flex: none; justify-content: flex-end; height: 34px; padding: 4px 4px 2px; }
.save { width: 112px; border-radius: 4px; font-size: 12px; color: #fff; background: linear-gradient(#2bb1fa, #1580d8); text-shadow: 0 1px 0 #0a5cc0; }

/* Rich text editor */
.editor {
  display: flex;
  flex: 1;
  flex-direction: column;
  min-width: 0;
  height: 178px;
  margin-bottom: 1px;
  border: 2px solid #d7dde3;
  border-radius: 3px;
}
.ed-tools { position: relative; display: flex; flex: none; flex-direction: column; gap: 4px; height: 105px; padding: 2px 3px; border: 1px solid #b4b8bc; border-bottom: 0; background: #eeeeee; }
.ed-row { display: flex; gap: 3px; }
.grp { display: flex; height: 22px; border: 1px solid #b8b8b8; border-radius: 1px; background: linear-gradient(#f4f4f4, #efefef 50%, #dedede 51%, #f0f0f0); }
.grp button { display: flex; align-items: center; justify-content: center; width: 22px; font-family: "Liberation Serif", serif; color: #000; }
.grp .g-b { font-size: 13px; font-weight: bold; }
.grp .g-i { font-size: 13px; font-weight: bold; font-style: italic; }
.grp .g-u { font-size: 13px; font-weight: bold; text-decoration: underline; }
.grp .g-s { font-size: 9px; text-decoration: line-through; }
.grp .g-html { font: bold 7px "Liberation Sans", sans-serif; color: #29538f; }
.w1 { width: 24px; }
.w2 { width: 46px; }
.w3 { width: 68px; }
.ed-sep { width: 1px; height: 22px; background: #b0b0b0; }
.ed-select { position: relative; width: 84px; height: 22px; }
.ed-select select { width: 100%; height: 100%; padding: 1px 0 0 3px; border: 1px solid #b0b0b0; border-radius: 0; appearance: none; background: #fff; font: 11px "DejaVu Sans Condensed", "DejaVu Sans", sans-serif; color: #000; }
.ed-select::before { content: ""; position: absolute; right: 0; top: 0; bottom: 0; width: 14px; border: 1px solid #b0b0b0; background: #ececec; }
.ed-select::after { content: ""; position: absolute; right: 4px; top: 9px; border: 3px solid transparent; border-top-color: #777; border-bottom: 0; }
.ed-globe { position: absolute; right: 8px; top: 8px; }
.ed-body { flex: 1; border: 1px solid #b4b8bc; background: #fff; }
.ed-foot { height: 20px; border: 1px solid #b4b8bc; border-top: 0; background: #eee; }

/* Inset with the text module window */
.inset {
  position: absolute;
  left: 214px;
  right: 2px;
  top: 199px;
  display: flex;
  height: 471px;
  padding: 13px 15px 14px 18px;
  border: 4px solid #000;
  border-radius: 3px;
  background: linear-gradient(165deg, #d0edf6 0%, #dceff6 50%, #cfe3f2 80%, #bdd6ef 100%);
}
.toolbar-text { height: 33px; padding: 2px 0 0 2px; border-bottom: 1px solid #9db2c0; }
.tb-sep { width: 1px; height: 14px; margin: 0 2px; background: #8fc0f0; }
.tw-body { display: flex; flex: 1; min-height: 0; padding: 2px 2px 2px 1px; background: #f9fbfb; }
.side { display: flex; flex: none; flex-direction: column; width: 180px; border: 1px solid #9db2c0; border-left: 0; background: #fff; }
.side-head { display: flex; flex: none; align-items: center; justify-content: space-between; height: 34px; padding: 0 5px 0 4px; border-bottom: 1px solid #dfe5ea; background: linear-gradient(#f8f8f8, #e7e8ea); }
.collapse { width: 13px; height: 13px; border-radius: 2px; background: #627886; }
.collapse svg { width: 13px; height: 13px; }
.tree { padding-top: 5px; }
.tree li { display: flex; align-items: center; gap: 3px; height: 22px; padding-left: 21px; }
.tree .root { padding-left: 5px; }
.tree .sel { background: #dcebf6; box-shadow: inset 0 1px #c9dcea, inset 0 -1px #c9dcea; }
.tree .x { width: 9px; height: 9px; }
.tree .f { height: 13px; }
.content { display: flex; flex: 1; flex-direction: column; min-width: 0; }
.tabbar { display: flex; flex: none; align-items: flex-end; height: 34px; padding: 0 3px 1px 5px; border-bottom: 2px solid #1681d6; }
.tabs-text { flex: 1; min-width: 0; margin-bottom: -1px; overflow: hidden; }
.scr { display: flex; flex: none; align-items: center; justify-content: center; width: 18px; height: 20px; border: 1px solid #9dbbe8; border-right: 0; background: #d3e1f4; }
.scr svg { width: 10px; height: 10px; }
.scr-off { margin-right: 5px; border: 1px solid #d3dced; background: #eaeff7; }
.grid { display: flex; flex: 1; flex-direction: column; min-height: 0; margin: 1px 0 0 1px; border: 1px solid #9db2c0; background: #fff; }
.toolbar-grid { height: 33px; padding: 1px 10px 0 2px; border-bottom: 1px solid #9db2c0; background: #ebedef; }
.search { display: flex; align-items: center; gap: 6px; width: 192px; height: 21px; margin-left: auto; padding: 0 8px; border: 1px solid #a9b9c5; border-radius: 11px; background: #fff; }
.search svg { width: 13px; height: 13px; }
.search input { flex: 1; color: #6d8290; }
.grid-view { flex: 1; min-height: 0; overflow: hidden; }
table { width: 100%; table-layout: fixed; border-collapse: separate; border-spacing: 0; }
.c-check { width: 24px; }
.c-ns { width: 136px; }
.c-val { width: 214px; }
.c-act { width: 52px; }
th { height: 23px; padding: 0 0 0 6px; border-left: 1px solid #c3cad0; text-align: left; font-weight: normal; background: linear-gradient(#f8f8f8, #e6e7e9); }
td { height: 21px; padding: 0 0 0 6px; border-bottom: 1px solid #cdd6dd; white-space: nowrap; }
tbody tr:nth-child(even) td { background: #f3f5f7; }
th:first-child, tbody td:first-child { padding-left: 7px; border-left: 0; }
tbody tr td:first-child, tbody tr:nth-child(even) td:first-child { background: #e9eaec; }
input[type="checkbox"] { display: block; width: 10px; height: 10px; margin: 0; appearance: none; border: 1px solid #aeb2b5; border-radius: 2px; background: linear-gradient(#fff, #e6e6e6); }
.acts { display: flex; gap: 8px; }
.paging { display: flex; flex: none; align-items: center; height: 31px; padding: 0 6px; border-top: 1px solid #9db2c0; background: #ebedef; }
.pg { width: 12px; height: 12px; margin-right: 11px; }
.pg svg { width: 12px; height: 12px; }
.pg.reload, .reload svg { width: 16px; height: 16px; }
.pg-sep { width: 1px; height: 14px; margin-right: 8px; background: #b5bdc5; }
.page { flex: none; width: 30px; height: 24px; margin: 0 8px; }
.page input { width: 26px; }
.paging span { margin-right: 8px; }
.paging .pg-info { margin: 0 0 0 auto; }

/* Open drop-down list */
.dropdown { position: absolute; left: 209px; right: 84px; top: 732px; border: 1px solid #98aec0; border-top-color: #88b0e8; background: #fff; box-shadow: 0 2px 1px rgba(120, 150, 180, .35); }
.dropdown li { height: 23px; padding: 0 7px; line-height: 23px; }
.dropdown .over { height: 22px; margin-bottom: 1px; line-height: 22px; border-bottom: 1px solid #9db8e6; background: #dcebf6; }

.notes { position: absolute; left: 0; top: 0; width: 1237px; height: 830px; pointer-events: none; }
```
